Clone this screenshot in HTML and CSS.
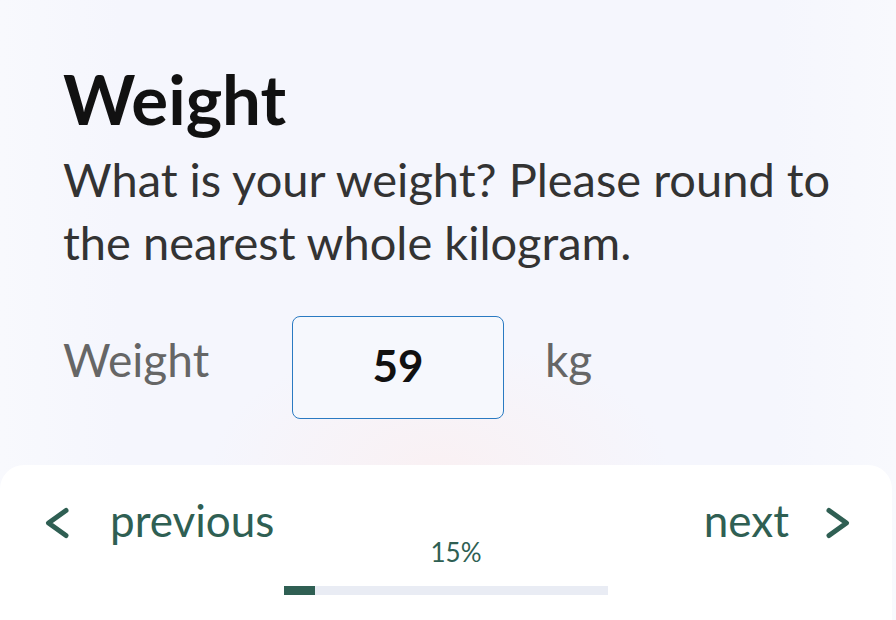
FILE: index.html
```html
<!DOCTYPE html>
<html lang="en">
<head>
<meta charset="utf-8">
<title>Weight</title>
<link rel="stylesheet" href="styles.css">
</head>
<body>
<div class="screen">
  <main class="content">
    <h1 class="title">Weight</h1>
    <p class="question">What is your weight? Please round to the nearest whole kilogram.</p>
    <div class="field-row">
      <span class="field-label">Weight</span>
      <div class="field-box"><span class="field-value">59</span></div>
      <span class="field-unit">kg</span>
    </div>
  </main>
  <footer class="panel">
    <div class="nav-prev">
      <svg class="chev" width="24" height="32" viewBox="0 0 24 32"><polyline points="21,3.5 3.5,16 21,28.5" fill="none" stroke="#2f5f53" stroke-width="5" stroke-linecap="round" stroke-linejoin="round"/></svg>
      <span class="nav-text">previous</span>
    </div>
    <div class="progress">
      <div class="percent">15%</div>
      <div class="bar"><div class="bar-fill"></div></div>
    </div>
    <div class="nav-next">
      <span class="nav-text">next</span>
      <svg class="chev" width="24" height="32" viewBox="0 0 24 32"><polyline points="3,3.5 20.5,16 3,28.5" fill="none" stroke="#2f5f53" stroke-width="5" stroke-linecap="round" stroke-linejoin="round"/></svg>
    </div>
  </footer>
</div>
</body>
</html>
```
FILE: styles.css
```css
html, body {
  margin: 0;
  padding: 0;
}
body {
  width: 896px;
  height: 620px;
  overflow: hidden;
  font-family: Lato, "Noto Sans", sans-serif;
  background: #f5f6fd;
}
.screen {
  height: 620px;
  display: flex;
  flex-direction: column;
  background:
    radial-gradient(ellipse 230px 130px at 440px 470px, rgba(250, 240, 242, 0.9), rgba(245, 246, 253, 0)),
    linear-gradient(90deg, #f8f9fd 0, #f5f6fd 120px, #f5f6fd 776px, #f8f9fd 896px);
}
.content {
  flex: none;
  padding: 58px 0 0 63px;
  height: 465px;
  box-sizing: border-box;
}
.title {
  margin: 0;
  font-size: 69px;
  line-height: 82px;
  font-weight: 700;
  color: #111;
}
.question {
  margin: 8px 0 0;
  font-size: 47px;
  line-height: 63px;
  color: #333;
  width: 800px;
}
.field-row {
  margin-top: 42px;
  display: flex;
  align-items: center;
}
.field-label,
.field-unit {
  font-size: 46px;
  line-height: 55px;
  color: #666;
  margin-bottom: 16px;
}
.field-label {
  width: 229px;
}
.field-box {
  width: 212px;
  height: 103px;
  box-sizing: border-box;
  border: 1.5px solid #2a7ac2;
  border-radius: 8px;
  background: #f6f8fd;
  display: flex;
  align-items: center;
  justify-content: center;
}
.field-value {
  font-size: 44px;
  font-weight: 700;
  color: #111;
  line-height: 53px;
  margin-bottom: 4px;
}
.field-unit {
  margin-left: 41px;
}
.panel {
  width: 892px;
  flex: 1;
  background: #fff;
  border-radius: 24px 24px 0 0;
  box-sizing: border-box;
  padding: 30px 42px 0 44px;
  display: grid;
  grid-template-columns: 240px 324px 1fr;
  align-items: start;
}
.nav-prev,
.nav-next {
  display: flex;
  align-items: center;
  color: #2f5f53;
}
.nav-prev {
  gap: 41px;
}
.nav-next {
  justify-self: end;
  gap: 37px;
}
.nav-prev .chev {
  margin-left: 1px;
}
.chev {
  margin-top: 6px;
  flex: none;
}
.nav-text {
  font-size: 44px;
  line-height: 50px;
}
.progress {
  padding-top: 42px;
}
.percent {
  font-size: 26px;
  line-height: 31px;
  color: #2f5f53;
  text-align: center;
  padding-left: 20px;
}
.bar {
  margin-top: 18px;
  height: 9px;
  background: #e9ecf4;
}
.bar-fill {
  width: 31px;
  height: 100%;
  background: #2f5f53;
}
```
